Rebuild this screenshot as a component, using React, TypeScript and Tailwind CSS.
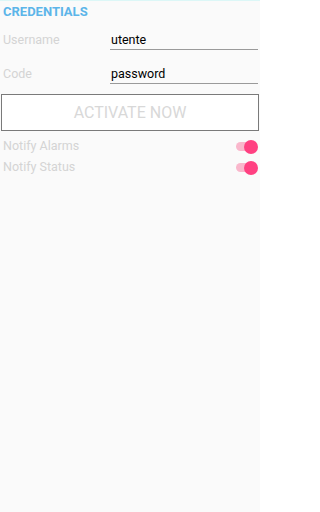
export default function App() {
  const switches = ["Notify Alarms", "Notify Status"]

  return (
    <div className="w-[260px] h-[512px] bg-[#fafafa] border-t border-[#dcf7f7] font-['Roboto',sans-serif]">
      {/* Header */}
      <div className="px-[3px] pt-[2px] text-[13px] leading-[17px] font-bold text-[#5cb5e9]">CREDENTIALS</div>

      {/* Fields */}
      <div className="flex items-end mt-[10px] h-[20px]">
        <div className="w-[110px] pl-[3px] text-[12.5px] text-[#d4d4d4] leading-[16px] pb-[2px]">Username</div>
        <div className="flex-1 mr-[2px] border-b border-[#9a9a9a] text-[12.5px] text-black leading-[16px] pb-[1px] pl-[1px]">utente</div>
      </div>
      <div className="flex items-end mt-[14px] h-[20px]">
        <div className="w-[110px] pl-[3px] text-[12.5px] text-[#d4d4d4] leading-[16px] pb-[2px]">Code</div>
        <div className="flex-1 mr-[2px] border-b border-[#9a9a9a] text-[12.5px] text-black leading-[16px] pb-[1px] pl-[1px]">password</div>
      </div>

      {/* Button */}
      <div className="px-[1px] mt-[10px]">
        <button className="w-full h-[37px] bg-white border border-[#7a7a7a] text-[16px] text-[#d8d8d8] leading-none">
          ACTIVATE NOW
        </button>
      </div>

      {/* Switches */}
      <div className="mt-[5px] flex flex-col">
        {switches.map((label) => (
          <div key={label} className="flex items-center justify-between h-[21px] pl-[3px] pr-[2px]">
            <span className="text-[12.5px] text-[#d4d4d4]">{label}</span>
            <span className="relative w-[22px] h-[14px] flex items-center">
              <span className="w-[20px] h-[9px] rounded-full bg-[#f9b7cc]" />
              <span className="absolute right-0 w-[14px] h-[14px] rounded-full bg-[#ff4081]" />
            </span>
          </div>
        ))}
      </div>
    </div>
  )
}
